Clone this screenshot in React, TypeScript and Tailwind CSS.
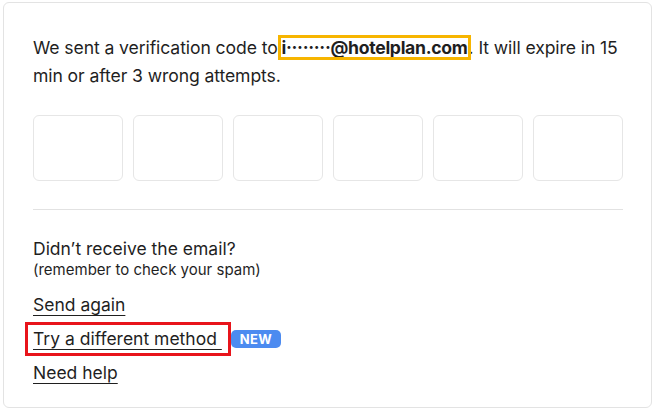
export default function App() {
  const boxes = [0, 1, 2, 3, 4, 5];
  return (
    <div className="w-[656px] h-[412px] bg-white pt-[2px] pl-[3px] pr-[4px] pb-[4px] font-['Inter',sans-serif] text-[#1f1f1f]">
      <div className="h-full rounded-[6px] border border-[#e3e3e3] pl-[29px] pr-[28px] pt-[31px]">
        <p className="text-[17.6px] leading-[28px] tracking-[-0.1px]">
          We sent a verification code to{' '}
          <span className="font-bold outline outline-[3px] outline-[#f7b500] -outline-offset-[1px] px-[1px] -ml-[2px] tracking-[-0.3px]">i········@hotelplan.com</span>. It will
          expire in 15 min or after 3 wrong attempts.
        </p>

        <div className="mt-[25px] flex gap-[10px]">
          {boxes.map((b) => (
            <div key={b} className="w-[90px] h-[66px] rounded-[6px] border border-[#e6e6e6]" />
          ))}
        </div>

        <div className="mt-[28px] border-t border-[#e2e2e2]" />

        <div className="mt-[27px]">
          <p className="text-[17.5px] leading-[24px]">Didn’t receive the email?</p>
          <p className="text-[15px] leading-[18px]">(remember to check your spam)</p>
        </div>

        <div className="mt-[9px] flex flex-col text-[17.5px]">
          <div className="h-[34px] flex items-center">
            <a className="underline underline-offset-[4px]">Send again</a>
          </div>
          <div className="h-[34px] flex items-center">
            <a className="-ml-[8px] h-[34px] pl-[5px] pr-[6px] border-[3px] border-[#e8141b] underline underline-offset-[4px] leading-[28px]">
              Try a different method&nbsp;
            </a>
            <span className="rounded-[5px] bg-[#4c8bf0] px-[9px] text-[13px] leading-[18px] font-bold text-white tracking-wide">NEW</span>
          </div>
          <div className="h-[34px] flex items-center">
            <a className="underline underline-offset-[4px]">Need help</a>
          </div>
        </div>
      </div>
    </div>
  );
}
